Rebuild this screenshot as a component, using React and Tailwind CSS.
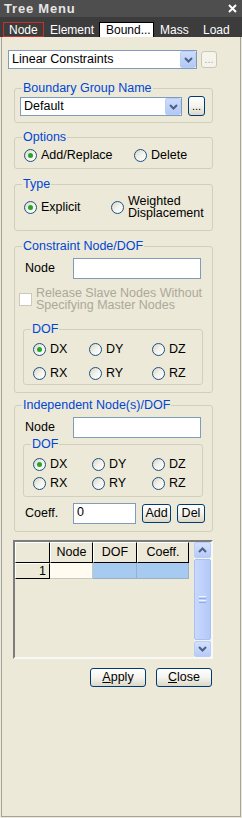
import React from "react";

const Chevron = ({ up = false }) => (
  <svg width="9" height="6" viewBox="0 0 9 6">
    <path
      d={up ? "M1 5 L4.5 1.5 L8 5" : "M1 1 L4.5 4.5 L8 1"}
      fill="none"
      stroke="#4d6185"
      strokeWidth="2"
    />
  </svg>
);

function Combo({ text, className }) {
  return (
    <div className={`flex items-center bg-white border border-[#7f9db9] h-[19px] ${className}`}>
      <span className="flex-1 pl-[3px] leading-[17px] truncate">{text}</span>
      <span className="w-[16px] h-[17px] flex items-center justify-center rounded-[2px] border border-[#b9cdf6] bg-linear-to-b from-[#cddcfc] to-[#b2c8f5]">
        <Chevron />
      </span>
    </div>
  );
}

function XPButton({ children, className }) {
  return (
    <div
      className={`flex items-center justify-center border border-[#003c74] rounded-[3px] bg-linear-to-b from-white via-[#f4f3ee] to-[#dcd8c8] leading-none ${className}`}
    >
      {children}
    </div>
  );
}

function Group({ legend, className, children }) {
  return (
    <div className={`relative border border-[#d0d0bf] rounded-[3px] ${className}`}>
      <span className="absolute left-[7px] top-[-8px] px-[1px] bg-[#ece9d8] text-[#0046d5] leading-[14px] whitespace-nowrap">
        {legend}
      </span>
      {children}
    </div>
  );
}

function Radio({ checked, label, className = "" }) {
  return (
    <div className={`flex items-center gap-[4px] leading-[13px] ${className}`}>
      <span className="w-[13px] h-[13px] shrink-0 rounded-full border border-[#1c5180] bg-linear-to-br from-[#d9d6c6] via-[#f3f2ec] to-white flex items-center justify-center">
        {checked && <span className="w-[5px] h-[5px] rounded-full bg-[#27a627]" />}
      </span>
      <span>{label}</span>
    </div>
  );
}

function TextBox({ className, children }) {
  return (
    <div className={`bg-white border border-[#7f9db9] h-[21px] pl-[3px] leading-[17px] ${className}`}>
      {children}
    </div>
  );
}

function DofGrid({ cols, gap, className }) {
  return (
    <div className={`grid ${cols} ${gap} ${className}`}>
      <Radio checked label="DX" />
      <Radio label="DY" />
      <Radio label="DZ" />
      <Radio label="RX" />
      <Radio label="RY" />
      <Radio label="RZ" />
    </div>
  );
}

export default function App() {
  return (
    <div className="w-[242px] h-[818px] bg-[#ece9d8] flex flex-col overflow-hidden text-black text-[12.5px] font-['Liberation_Sans',Arial,sans-serif]">
      {/* title bar */}
      <div className="h-[17px] shrink-0 bg-[#4e4e4e] flex items-center justify-between pl-[4px] pr-[5px]">
        <span className="text-[13px] font-bold text-[#e6e6e6] leading-none tracking-[0.8px]">Tree Menu</span>
        <svg width="9" height="9" viewBox="0 0 9 9">
          <path d="M1 1 L8 8 M8 1 L1 8" stroke="#ffffff" strokeWidth="2" />
        </svg>
      </div>
      {/* tabs */}
      <div className="h-[20px] shrink-0 bg-[#3c3c3c] flex items-end text-[12px] text-white leading-none">
        <div className="ml-[3px] w-[41px] h-[15px] border border-[#c8302c] flex items-center pl-[5px]">Node</div>
        <div className="w-[55px] h-[15px] flex items-center pl-[6px]">Element</div>
        <div className="w-[55px] h-[15px] flex items-center pl-[6px] bg-white text-black border border-b-0 border-black">Bound...</div>
        <div className="w-[43px] h-[15px] flex items-center pl-[6px]">Mass</div>
        <div className="w-[40px] h-[15px] flex items-center pl-[6px]">Load</div>
      </div>
      {/* body */}
      <div className="flex-1 ml-[1px] mb-[1px] w-[240px] border-x border-b border-[#a5a39a] flex flex-col">
        <div className="mt-[13px] ml-[6px] flex items-center">
          <Combo text="Linear Constraints" className="w-[189px]" />
          <div className="ml-[4px] w-[16px] h-[17px] rounded-[3px] border border-[#c9c7ba] bg-[#f5f4ea] text-[#aca899] flex items-center justify-center leading-none text-[11px]">
            ...
          </div>
        </div>

        <Group legend="Boundary Group Name" className="mt-[19px] ml-[12px] w-[199px] h-[35px]">
          <div className="pt-[8px] pl-[5px] flex items-start">
            <Combo text="Default" className="w-[162px]" />
            <XPButton className="ml-[6px] -mt-[1px] w-[17px] h-[20px] text-[11px]">...</XPButton>
          </div>
        </Group>

        <Group legend="Options" className="mt-[14px] ml-[12px] w-[199px] h-[32px]">
          <div className="pt-[11px] pl-[9px] flex">
            <Radio checked label="Add/Replace" className="w-[110px]" />
            <Radio label="Delete" />
          </div>
        </Group>

        <Group legend="Type" className="mt-[15px] ml-[12px] w-[199px] h-[47px]">
          <div className="pt-[10px] pl-[9px] flex items-center h-[34px]">
            <Radio checked label="Explicit" className="w-[87px]" />
            <div className="flex items-center gap-[4px]">
              <span className="w-[13px] h-[13px] shrink-0 rounded-full border border-[#1c5180] bg-linear-to-br from-[#d9d6c6] via-[#f3f2ec] to-white" />
              <span className="leading-[12px]">
                Weighted
                <br />
                Displacement
              </span>
            </div>
          </div>
        </Group>

        <Group legend="Constraint Node/DOF" className="mt-[15px] ml-[12px] w-[199px] h-[147px]">
          <div className="pt-[11px] pl-[10px] flex items-center">
            <span className="w-[48px]">Node</span>
            <TextBox className="w-[128px]" />
          </div>
          <div className="mt-[8px] pl-[4px] flex items-center gap-[4px]">
            <span className="w-[13px] h-[13px] shrink-0 border border-[#cac8bb] bg-white" />
            <span className="leading-[12px] text-[#aca899] whitespace-nowrap">
              Release Slave Nodes Without
              <br />
              Specifying Master Nodes
            </span>
          </div>
          <Group legend="DOF" className="mt-[18px] ml-[8px] w-[180px] h-[56px]">
            <DofGrid cols="grid-cols-[56px_63px_auto]" gap="gap-y-[11px]" className="pt-[13px] pl-[9px]" />
          </Group>
        </Group>

        <Group legend="Independent Node(s)/DOF" className="mt-[12px] ml-[12px] w-[199px] h-[127px]">
          <div className="pt-[11px] pl-[10px] flex items-center">
            <span className="w-[48px]">Node</span>
            <TextBox className="w-[128px]" />
          </div>
          <Group legend="DOF" className="mt-[6px] ml-[8px] w-[180px] h-[53px]">
            <DofGrid cols="grid-cols-[59px_60px_auto]" gap="gap-y-[6px]" className="pt-[13px] pl-[9px]" />
          </Group>
          <div className="mt-[6px] pl-[10px] flex items-center">
            <span className="w-[48px]">Coeff.</span>
            <TextBox className="w-[63px]">0</TextBox>
            <XPButton className="ml-[6px] w-[29px] h-[19px]">Add</XPButton>
            <XPButton className="ml-[6px] w-[28px] h-[19px]">Del</XPButton>
          </div>
        </Group>

        {/* grid */}
        <div className="mt-[8px] ml-[11px] w-[200px] h-[119px] border-2 border-t-[#7d7d7d] border-l-[#7d7d7d] border-r-[#f8f8f6] border-b-[#f8f8f6] flex">
          <div className="flex-1 flex flex-col">
            <div className="flex h-[21px] leading-none">
              <div className="w-[35px] h-full bg-[#ece9d8] border-t border-l border-t-white border-l-white border-r border-b border-black" />
              <div className="w-[43px] h-full bg-[#ece9d8] border-t border-l border-t-white border-l-white border-r border-b border-black flex items-center justify-center">Node</div>
              <div className="w-[44px] h-full bg-[#ece9d8] border-t border-l border-t-white border-l-white border-r border-b border-black flex items-center justify-center">DOF</div>
              <div className="w-[52px] h-full bg-[#ece9d8] border-t border-l border-t-white border-l-white border-r border-b border-black flex items-center justify-center">Coeff.</div>
            </div>
            <div className="flex h-[16px] leading-none">
              <div className="w-[35px] h-full bg-[#ece9d8] border-t border-l border-t-white border-l-white border-r border-b border-black flex items-center justify-end pr-[3px]">1</div>
              <div className="w-[43px] h-full bg-[#fffbf0] border-r border-b border-[#c8c8c0]" />
              <div className="w-[44px] h-full bg-[#a6caf0] border-r border-b border-[#9ab0c8]" />
              <div className="w-[52px] h-full bg-[#a6caf0] border-r border-b border-[#9ab0c8]" />
            </div>
          </div>
          {/* scrollbar */}
          <div className="w-[17px] h-full flex flex-col gap-[1px] bg-[#f3f1ec]">
            <div className="h-[16px] rounded-[2px] border border-[#b9cdf7] bg-linear-to-b from-[#d3e0fd] to-[#b7cbf7] flex items-center justify-center">
              <Chevron up />
            </div>
            <div className="flex-1 rounded-[2px] border border-[#a9c0f2] bg-linear-to-r from-[#c9d9fd] to-[#b3c9f7] flex flex-col items-center justify-center gap-[1px]">
              <span className="w-[7px] h-[1px] bg-[#eef3fe]" />
              <span className="w-[7px] h-[1px] bg-[#8eaaee]" />
              <span className="w-[7px] h-[1px] bg-[#eef3fe]" />
              <span className="w-[7px] h-[1px] bg-[#8eaaee]" />
            </div>
            <div className="h-[16px] rounded-[2px] border border-[#b9cdf7] bg-linear-to-b from-[#d3e0fd] to-[#b7cbf7] flex items-center justify-center">
              <Chevron />
            </div>
          </div>
        </div>

        <div className="mt-[9px] ml-[88px] flex">
          <XPButton className="w-[56px] h-[19px]">
            <span className="underline">A</span>pply
          </XPButton>
          <XPButton className="ml-[10px] w-[56px] h-[19px]">
            <span className="underline">C</span>lose
          </XPButton>
        </div>
      </div>
    </div>
  );
}
